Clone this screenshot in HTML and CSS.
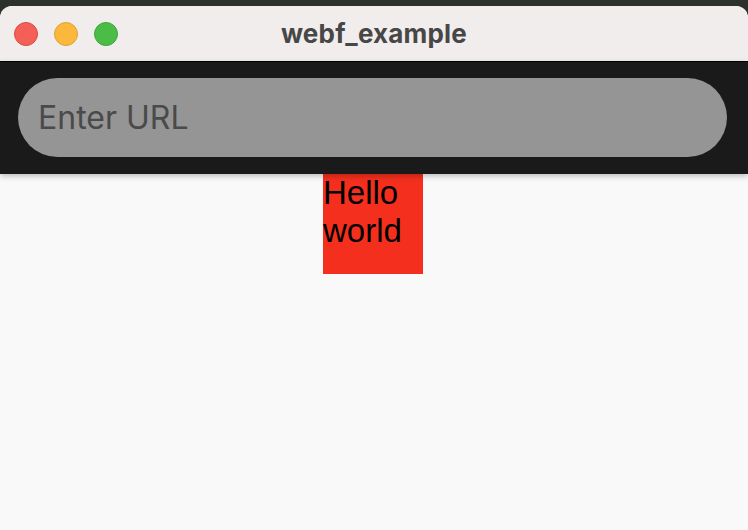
FILE: index.html
```html
<!DOCTYPE html>
<html>
<head>
<meta charset="utf-8">
<link rel="stylesheet" href="styles.css">
</head>
<body>
<div class="desk">
  <div class="window">
    <div class="titlebar">
      <div class="lights">
        <span class="light red"></span>
        <span class="light yellow"></span>
        <span class="light green"></span>
      </div>
      <div class="title">webf_example</div>
    </div>
    <div class="toolbar">
      <div class="url">Enter URL</div>
    </div>
    <div class="content">
      <div class="box">Hello world</div>
    </div>
  </div>
</div>
</body>
</html>
```
FILE: styles.css
```css
html, body {
  margin: 0;
  padding: 0;
  width: 748px;
  height: 530px;
  overflow: hidden;
  font-family: "Inter", "Liberation Sans", sans-serif;
}
.desk {
  background: #2d312c;
  padding-top: 6px;
  height: 524px;
}
.window {
  height: 524px;
  display: flex;
  flex-direction: column;
  background: #f9f9f9;
  border-radius: 12px 12px 0 0;
  overflow: hidden;
}
.titlebar {
  height: 55px;
  background: #f1edec;
  border-bottom: 1px solid #000;
  display: flex;
  align-items: center;
  position: relative;
}
.lights {
  display: flex;
  gap: 16px;
  padding-left: 14px;
}
.light {
  width: 24px;
  height: 24px;
  border-radius: 50%;
  box-sizing: border-box;
}
.red { background: #f45f57; border: 1px solid #de4a42; }
.yellow { background: #fcb73d; border: 1px solid #e0a033; }
.green { background: #4bbd47; border: 1px solid #3da63a; }
.title {
  position: absolute;
  left: 0;
  right: 0;
  top: 0;
  bottom: 0;
  display: flex;
  align-items: center;
  justify-content: center;
  font-weight: 700;
  font-size: 26px;
  color: #474747;
  letter-spacing: 0.2px;
}
.toolbar {
  height: 112px;
  background: #1a1a1a;
  padding: 16px 21px 0 18px;
  box-sizing: border-box;
  box-shadow: 0 2px 6px rgba(0,0,0,0.25);
  position: relative;
  z-index: 1;
}
.url {
  height: 79px;
  border-radius: 40px;
  background: #959595;
  color: #4a4a4a;
  font-size: 32px;
  display: flex;
  align-items: center;
  padding-left: 20px;
  padding-bottom: 1px;
  box-sizing: border-box;
}
.content {
  flex: 1;
  display: flex;
  justify-content: center;
}
.box {
  width: 100px;
  height: 100px;
  background: #f52f1e;
  color: #000;
  font-family: "Liberation Sans", sans-serif;
  font-size: 33px;
  line-height: 38px;
  margin-left: -2px;
}
```
